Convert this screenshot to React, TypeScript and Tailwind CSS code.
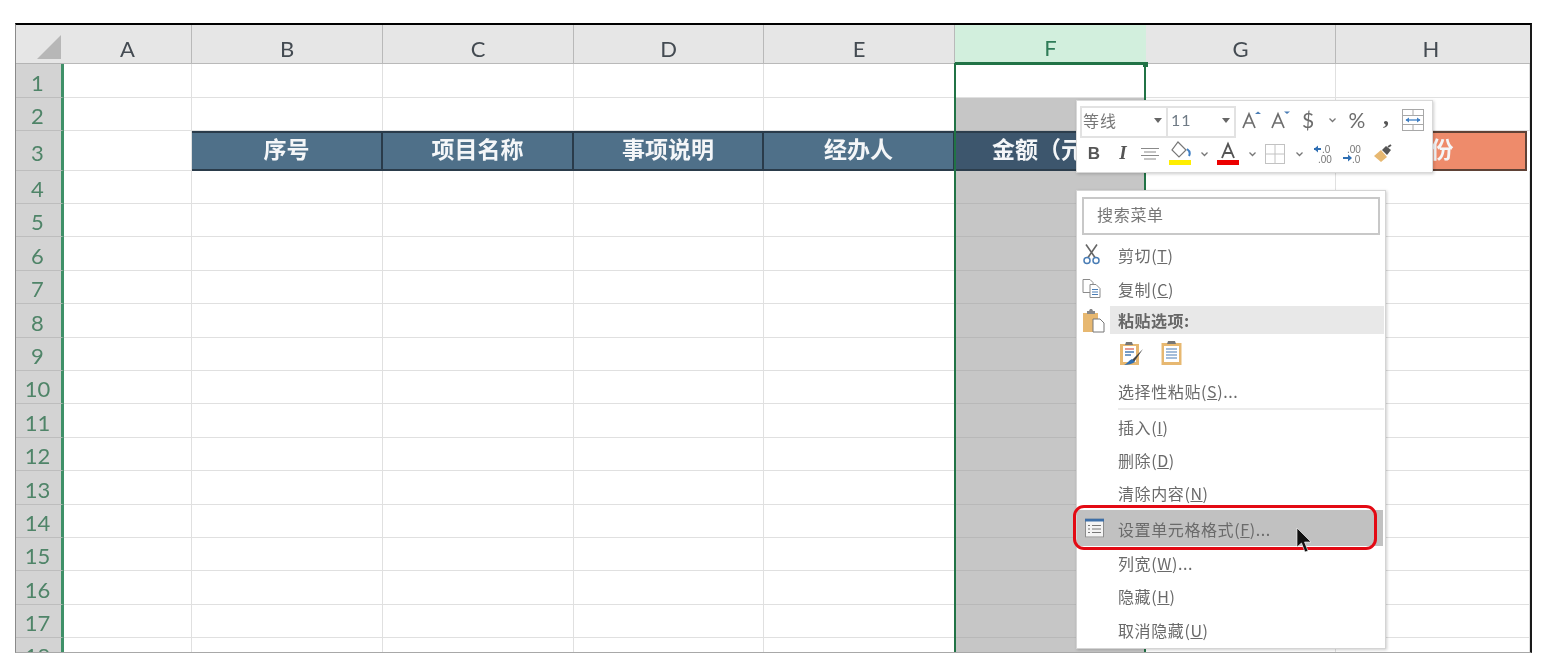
import React from "react";

const colsLetters = ["A", "B", "C", "D", "E", "F", "G", "H"];
const heights = [34, 33, 40, 33, 33, 34, 33, 34, 33, 33, 34, 33, 34, 33, 33, 34, 33, 33];

const header3: Record<string, string> = { B: "序号", C: "项目名称", D: "事项说明", E: "经办人", F: "金额（元）", H: "月份" };

function Chevron({ x = 9 }: { x?: number }) {
  return (
    <svg width={x} height="6" viewBox="0 0 9 6" className="shrink-0">
      <path d="M1.5 1.5 L4.5 4.5 L7.5 1.5" fill="none" stroke="#777" strokeWidth="1.3" />
    </svg>
  );
}

function Cell({ letter, row }: { letter: string; row: number }) {
  const isHead = row === 3 && header3[letter];
  const cjk = "font-['Noto_Sans_CJK_SC',sans-serif]";
  if (isHead) {
    const bg = letter === "H" ? "bg-[#ee8b6b] border-[#5f4236] mr-[3px]" : letter === "F" ? "bg-[#3d566d] border-[#2c3d4c]" : "bg-[#4f7089] border-[#2a3b4a]";
    return (
      <div className={`${bg} ${cjk} border-y-2 border-r-2 flex items-center justify-center pb-[5px] text-[23px] font-bold text-[#f4f6f8] whitespace-nowrap overflow-hidden`}>
        {header3[letter]}
      </div>
    );
  }
  const sel = letter === "F" && row > 1;
  return <div className={sel ? "bg-[#c6c6c6] border-b border-[#b8b8b8]" : "bg-white border-r border-b border-[#e0e0e0]"} />;
}

function Sheet() {
  return (
    <div className="relative w-full h-full overflow-hidden">
      <div className="grid grid-cols-[48px_128px_191px_191px_190px_191px_191px_190px_194px] grid-rows-[39px_34px_33px_40px_33px_33px_34px_33px_34px_33px_33px_34px_33px_34px_33px_33px_34px_33px_33px] font-['Lato',sans-serif]">
        <div className="bg-[#e6e6e6] border-b border-[#b4b4b4] flex items-end justify-end pr-[3px] pb-[4px]">
          <svg width="24" height="24" viewBox="0 0 24 24">
            <path d="M24 0 V24 H0 Z" fill="#b7b7b7" />
          </svg>
        </div>
        {colsLetters.map((c) => (
          <div
            key={c}
            className={
              c === "F"
                ? "bg-[#d2efdd] border-b-2 border-[#217346] flex items-center justify-center pt-[8px] text-[22px] text-[#2f7c58]"
                : c === "H"
                ? "bg-[#e6e6e6] border-b border-[#b9b9b9] flex items-center justify-center pt-[8px] pr-[4px] text-[22px] text-[#444b52]"
                : "bg-[#e6e6e6] border-r border-b border-[#b9b9b9] flex items-center justify-center pt-[8px] text-[22px] text-[#444b52]"
            }
          >
            {c}
          </div>
        ))}
        {heights.map((_, i) => (
          <React.Fragment key={i}>
            <div className="bg-[#d3d3d3] border-r-[3px] border-r-[#3f9068] border-b border-b-[#bdbdbd] flex items-center justify-center pt-[4px] pr-[2px] text-[22px] text-[#4f8468] leading-none">
              {i + 1}
            </div>
            {colsLetters.map((c) => (
              <Cell key={c} letter={c} row={i + 1} />
            ))}
          </React.Fragment>
        ))}
      </div>
      {/* selection outline */}
      <div className="absolute left-[938px] top-[38px] w-[192px] h-[640px] border-2 border-[#217346] pointer-events-none">
        <div className="w-full h-[32px] bg-white" />
      </div>
      <div className="absolute left-[1127px] top-[37px] w-[5px] h-[5px] bg-[#217346]" />
    </div>
  );
}

function TinyA({ up }: { up: boolean }) {
  return (
    <span className="relative w-[29px] h-[24px] flex items-center justify-center -mt-[3px]">
      <svg width="22" height="22" viewBox="0 0 22 22">
        <path d="M3 19 L9 5 L15 19 M5.2 14 H12.8" fill="none" stroke="#6d6d6d" strokeWidth="1.7" />
        <path d={up ? "M15 5 L18 2.5 L21 5 Z" : "M15 2.5 H21 L18 5 Z"} fill="#4a7db5" />
      </svg>
    </span>
  );
}

function Toolbar() {
  return (
    <div className="absolute left-[1060px] top-[75px] w-[357px] h-[73px] bg-white border border-[#d9d9d9] shadow-[1px_1px_3px_rgba(0,0,0,0.2)] pl-[3px] pt-[4px] font-['Noto_Sans_CJK_SC',sans-serif]">
      <div className="flex items-center h-[33px]">
        <div className="w-[88px] h-[32px] border-2 border-[#e2e2e2] flex items-center justify-between pl-[1px] pr-[4px] pb-[3px] text-[16px] tracking-[1px] text-[#777]">
          <span>等线</span>
          <svg width="8" height="5" viewBox="0 0 8 5"><path d="M0 0 H8 L4 5 Z" fill="#666" /></svg>
        </div>
        <div className="w-[68px] h-[32px] border-2 border-l-0 border-[#e2e2e2] flex items-center justify-between pl-[3px] pr-[4px] pb-[3px] text-[16px] tracking-[1px] text-[#6f7a85] font-['Lato',sans-serif]">
          <span>11</span>
          <svg width="8" height="5" viewBox="0 0 8 5"><path d="M0 0 H8 L4 5 Z" fill="#666" /></svg>
        </div>
        <div className="flex items-center">
          <TinyA up />
          <TinyA up={false} />
        </div>
        <span className="w-[28px] text-center text-[21px] text-[#6d6d6d] font-['Lato',sans-serif] leading-none pb-[5px]">$</span>
        <span className="w-[20px] flex justify-center pb-[3px]"><Chevron /></span>
        <span className="w-[30px] text-center text-[21px] text-[#6d6d6d] font-['Lato',sans-serif] leading-none pb-[5px]">%</span>
        <span className="w-[28px] text-center text-[24px] font-bold text-[#555] font-['Liberation_Serif',serif] leading-none pb-[12px]">,</span>
        <svg width="22" height="22" viewBox="0 0 22 22" className="ml-[2px] -mt-[3px]">
          <rect x="0.5" y="0.5" width="21" height="21" fill="#fff" stroke="#a8a8a8" />
          <path d="M0 6.5 H22 M0 15.5 H22 M11 0 V6 M11 16 V22" stroke="#a8a8a8" />
          <path d="M4 11 H18" stroke="#3f7fc4" strokeWidth="1.3" />
          <path d="M7 8.5 L3.5 11 L7 13.5 Z M15 8.5 L18.5 11 L15 13.5 Z" fill="#3f7fc4" />
        </svg>
      </div>
      <div className="flex items-center h-[33px] -mt-[1px]">
        <span className="w-[26px] ml-[1px] text-center text-[17px] font-bold text-[#555] font-['Liberation_Sans',sans-serif]">B</span>
        <span className="w-[32px] text-center text-[19px] font-bold italic text-[#555] font-['Liberation_Serif',serif]">I</span>
        <svg width="20" height="14" viewBox="0 0 20 14" className="mr-[4px] ml-[1px]">
          <path d="M1 1.5 H19 M4 5 H16 M1 8.5 H19 M4 12 H16" stroke="#8a8a8a" strokeWidth="1.1" />
        </svg>
        <svg width="24" height="26" viewBox="0 0 24 26" className="ml-[4px]">
          <path d="M10 1 L18 9 L11 16 L4 9 Z" fill="#fff" stroke="#777" strokeWidth="1.2" />
          <path d="M19 8 C22 10 22 13 21 15" fill="none" stroke="#3f7fc4" strokeWidth="2" />
          <rect x="1" y="19" width="22" height="5" fill="#ffee00" />
        </svg>
        <span className="w-[24px] flex justify-center"><Chevron /></span>
        <svg width="24" height="26" viewBox="0 0 24 26">
          <path d="M6 17 L12 3 L18 17 M8 12 H16" fill="none" stroke="#555" strokeWidth="1.9" />
          <rect x="1" y="19" width="22" height="5" fill="#ec0000" />
        </svg>
        <span className="w-[24px] flex justify-center"><Chevron /></span>
        <svg width="20" height="20" viewBox="0 0 20 20" className="ml-[1px]">
          <rect x="0.5" y="0.5" width="19" height="19" fill="#fff" stroke="#c2c2c2" />
          <path d="M10 0 V20 M0 10 H20" stroke="#c2c2c2" />
        </svg>
        <span className="w-[28px] flex justify-center"><Chevron /></span>
        <svg width="22" height="20" viewBox="0 0 22 20">
          <path d="M1 5 H8" stroke="#2f6fb3" strokeWidth="2" />
          <path d="M5 1.5 L1 5 L5 8.5 Z" fill="#2f6fb3" />
          <text x="9" y="8.5" fontSize="10" fill="#777" fontFamily="Liberation Sans">.0</text>
          <text x="5" y="18.5" fontSize="10" fill="#777" fontFamily="Liberation Sans">.00</text>
        </svg>
        <svg width="22" height="20" viewBox="0 0 22 20" className="ml-[7px]">
          <text x="5" y="8.5" fontSize="10" fill="#777" fontFamily="Liberation Sans">.00</text>
          <path d="M1 14 H8" stroke="#2f6fb3" strokeWidth="2" />
          <path d="M6 10.5 L10 14 L6 17.5 Z" fill="#2f6fb3" />
          <text x="10" y="18.5" fontSize="10" fill="#777" fontFamily="Liberation Sans">.0</text>
        </svg>
        <svg width="20" height="20" viewBox="0 0 20 20" className="ml-[9px]">
          <path d="M1 12 L8 6 L14 13 L8 18 Z" fill="#e7b871" />
          <path d="M9 6 L13 2 L18 6 L14 11 Z" fill="#555" />
          <path d="M15 3 L18 1" stroke="#555" strokeWidth="2" />
        </svg>
      </div>
    </div>
  );
}

function Item({ label, k, suffix = "", h, icon, shift = "" }: { label: string; k: string; suffix?: string; h: string; icon?: React.ReactNode; shift?: string }) {
  return (
    <div className={`flex items-center ${h} relative`}>
      <span className="absolute left-[5px] top-1/2 -translate-y-1/2 flex">{icon}</span>
      <span className={`ml-[41px] text-[16px] tracking-[0.6px] text-[#6a6a6a] whitespace-nowrap ${shift}`}>
        {label}(<span className="underline">{k}</span>){suffix}
      </span>
    </div>
  );
}

function Menu() {
  return (
    <div className="absolute left-[1060px] top-[165px] w-[310px] h-[459px] bg-white border border-[#d4d4d4] shadow-[1px_1px_3px_rgba(0,0,0,0.2)] font-['Noto_Sans_CJK_SC',sans-serif]">
      <div className="mx-[5px] mt-[6px] h-[38px] border-2 border-[#c8c8c8] flex items-center pl-[13px] pb-[4px] text-[16px] tracking-[0.7px] text-[#777]">搜索菜单</div>
      <div className="h-[4px]" />
      <Item
        label="剪切"
        k="T"
        h="h-[34px]"
        shift="pb-[2px]"
        icon={
          <svg width="20" height="22" viewBox="0 0 20 22" className="-mt-[3px]">
            <path d="M4 1 L13 14 M15 1 L6 14" stroke="#666" strokeWidth="1.6" fill="none" />
            <circle cx="5" cy="17" r="3" fill="none" stroke="#4a7db5" strokeWidth="1.5" />
            <circle cx="14" cy="17" r="3" fill="none" stroke="#4a7db5" strokeWidth="1.5" />
          </svg>
        }
      />
      <Item
        label="复制"
        k="C"
        h="h-[33px]"
        shift="pb-[1px]"
        icon={
          <svg width="20" height="20" viewBox="0 0 20 20" className="-mt-[3px]">
            <path d="M1 1 H8 L11 4 V14 H1 Z" fill="#fff" stroke="#8a8a8a" />
            <path d="M8 6 H14 L18 10 V19 H8 Z" fill="#fff" stroke="#8a8a8a" />
            <path d="M10 11 H16 M10 13.5 H16 M10 16 H16" stroke="#4a7db5" />
          </svg>
        }
      />
      <div className="h-[28px] relative flex items-center">
        <span className="absolute left-[5px] top-[3px] flex">
          <svg width="23" height="24" viewBox="0 0 23 24">
            <path d="M1 4 H16 V23 H1 Z" fill="#e7b871" />
            <path d="M5 5 V2 H7 L8 0 H10 L11 2 H13 V5 Z" fill="#888" />
            <path d="M11 10 H18 L22 14 V23 H11 Z" fill="#fff" stroke="#777" />
          </svg>
        </span>
        <div className="ml-[33px] mr-[1px] w-[274px] h-full bg-[#e8e8e8] flex items-center pl-[8px] pb-[1px] text-[16px] tracking-[0.5px] font-bold text-[#666]">粘贴选项:</div>
      </div>
      <div className="h-[41px] flex items-center pl-[42px] gap-[17px] pb-[3px]">
        <svg width="25" height="26" viewBox="0 0 25 26">
          <path d="M1 4 H20 V25 H1 Z" fill="#e7b871" />
          <rect x="4" y="6" width="13" height="16" fill="#fff" />
          <path d="M6 9 H15" stroke="#d9635a" strokeWidth="1.3" />
          <path d="M6 12 H15 M6 15 H12" stroke="#4a7db5" strokeWidth="1.3" />
          <path d="M7 2 H13 L14 5 H6 Z" fill="#777" />
          <path d="M24 9 L13 20 L15 22 Z" fill="#444" />
          <path d="M5 25 C8 24 10 20 13 19 L16 22 C13 24 9 25 5 25 Z" fill="#2f6fb3" />
        </svg>
        <svg width="21" height="26" viewBox="0 0 21 26">
          <path d="M0.5 3 H20.5 V25 H0.5 Z" fill="#e7b871" />
          <rect x="3" y="6" width="15" height="16" fill="#fff" />
          <path d="M5 9 H16 M5 12 H16 M5 15 H16 M5 18 H16" stroke="#4a7db5" strokeWidth="1.2" />
          <path d="M7 1 H14 L15 4 H6 Z" fill="#777" />
        </svg>
      </div>
      <Item label="选择性粘贴" k="S" suffix="..." h="h-[33px]" shift="pb-[1px]" />
      <div className="ml-[41px] mr-[1px] h-[2px] bg-[#ececec]" />
      <Item label="插入" k="I" h="h-[34px]" shift="pb-[1px]" />
      <Item label="删除" k="D" h="h-[33px]" shift="pb-[1px]" />
      <Item label="清除内容" k="N" h="h-[33px]" shift="pb-[1px]" />
      <div className="bg-[#c1c1c1] mr-[2px]">
        <Item
          label="设置单元格格式"
          k="F"
          suffix="..."
          h="h-[36px]"
          shift="pt-[1px]"
          icon={
            <svg width="19" height="19" viewBox="0 0 19 19" className="ml-[3px]">
              <rect x="0.5" y="0.5" width="18" height="18" fill="#f3f3f3" stroke="#8c8c8c" />
              <rect x="0" y="0" width="19" height="3" fill="#3d6fa8" />
              <path d="M3 7 H5 M3 10.5 H5 M3 14 H5 M7 7 H16 M7 10.5 H16 M7 14 H16" stroke="#777" />
            </svg>
          }
        />
      </div>
      <Item label="列宽" k="W" suffix="..." h="h-[34px]" />
      <Item label="隐藏" k="H" h="h-[33px]" shift="pb-[1px]" />
      <Item label="取消隐藏" k="U" h="h-[34px]" />
    </div>
  );
}

export default function App() {
  return (
    <div className="w-[1559px] h-[672px] bg-white overflow-hidden pt-[23px] pl-[15px] blur-[0.7px]">
      <div className="relative w-[1517px] h-[630px] border-t-2 border-r-2 border-b border-l border-t-black border-r-[#1a1a1a] border-b-[#a8a8a8] border-l-[#8a8a8a] overflow-hidden">
        <Sheet />
        <Toolbar />
        <Menu />
        {/* red highlight */}
        <div className="absolute left-[1057px] top-[480px] w-[304px] h-[45px] border-[3.5px] border-[#e30a14] rounded-[11px]" />
        {/* cursor */}
        <svg className="absolute left-[1280px] top-[502px]" width="18" height="27" viewBox="0 0 18 27">
          <path d="M1 1 V20 L5.5 16 L9 25 L12 24 L8.5 15 L15 15 Z" fill="#111" stroke="#fff" strokeWidth="0.6" />
        </svg>
      </div>
    </div>
  );
}
